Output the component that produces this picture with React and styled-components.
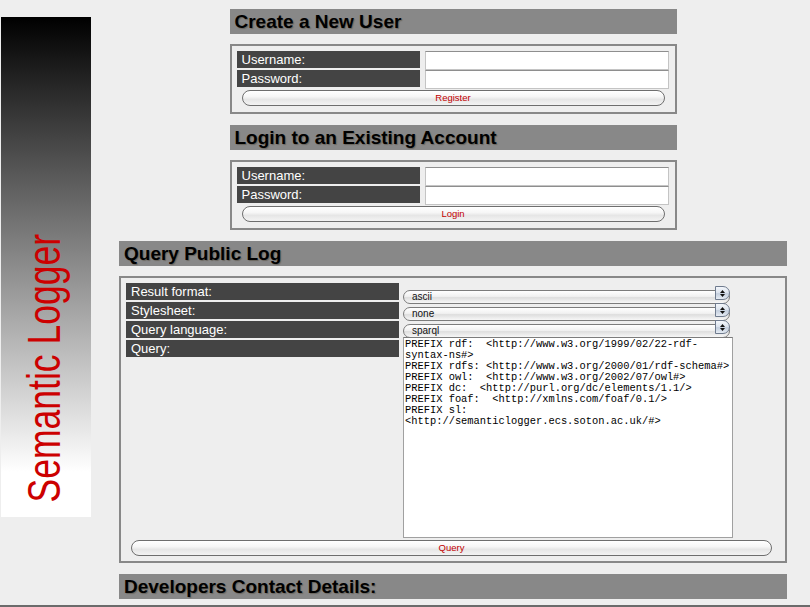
import React from 'react';
import styled, { createGlobalStyle } from 'styled-components';

const Global = createGlobalStyle`
  html, body { margin: 0; padding: 0; background: #eeeeee; }
  body { font-family: "Liberation Sans", Arial, Helvetica, sans-serif; overflow: hidden; }
  * { box-sizing: border-box; }
`;

const Page = styled.div`
  width: 810px;
  height: 607px;
  display: flex;
  flex-direction: column;
  overflow: hidden;
`;

const Columns = styled.div`
  display: flex;
  align-items: flex-start;
`;

const Sidebar = styled.aside`
  flex: none;
  width: 90px;
  height: 500px;
  margin: 17px 0 0 1px;
  padding-bottom: 15px;
  background: linear-gradient(to bottom, #000000 0%, #ffffff 91%, #ffffff 100%);
  display: flex;
  flex-direction: column;
  align-items: center;
  justify-content: flex-end;
`;

const Logo = styled.h1`
  margin: 0;
  writing-mode: vertical-rl;
  transform: rotate(180deg) scaleX(1.3);
  font: 400 35.5px/1 "Liberation Sans", Arial, sans-serif;
  color: #cc0000;
  white-space: nowrap;
`;

const Main = styled.main`
  flex: none;
  width: 668px;
  margin-left: 28px;
  padding-top: 9px;
  display: flex;
  flex-direction: column;
  align-items: center;
  gap: 11px;
`;

const Section = styled.section`
  width: ${p => (p.$narrow ? '447px' : '100%')};
  display: flex;
  flex-direction: column;
  gap: 10px;
`;

const Heading = styled.h2`
  margin: 0;
  height: 25px;
  padding-left: 5px;
  background: #888888;
  color: #000;
  font: 700 19px/26px "Liberation Sans", Arial, sans-serif;
  text-shadow: 1px 1px 1px rgba(40, 25, 0, 0.3);
  white-space: nowrap;
`;

const Box = styled.form`
  display: flex;
  flex-direction: column;
  border: 2px solid #888888;
  padding: 5px 6px ${p => (p.$query ? '5px' : '6px')} 5px;
`;

const AccountGrid = styled.div`
  display: grid;
  grid-template-columns: 183px 244px;
  grid-template-rows: 19px 19px;
  column-gap: 5px;
`;

const Label = styled.label`
  display: block;
  height: 17px;
  padding-left: 5px;
  background: #444444;
  color: #ffffff;
  font: 400 13px/17px "Liberation Sans", Arial, sans-serif;
  white-space: nowrap;
`;

const TextInput = styled.input`
  width: 100%;
  height: 19px;
  margin: 0;
  border: 1px solid #c4c4c4;
  border-top-color: #8e8e8e;
  background: #ffffff;
  padding: 0 3px;
  font: 12px "Liberation Sans", Arial, sans-serif;
`;

const Pill = styled.button`
  display: block;
  height: 16px;
  margin: ${p => p.$top}px ${p => p.$right}px 0 5px;
  padding: 0;
  border: 1px solid #6e6e6e;
  border-radius: 8px;
  background: linear-gradient(to bottom, #ffffff 0%, #f6f6f6 40%, #e6e6e6 60%, #f3f3f3 100%);
  box-shadow: inset 0 1px 0 #ffffff;
  color: #c20000;
  font: 400 9.5px/14px "Liberation Sans", Arial, sans-serif;
  cursor: pointer;
`;

const QueryGrid = styled.div`
  display: grid;
  grid-template-columns: 273px 1fr;
  column-gap: 4px;
`;

const LabelStack = styled.div`
  display: flex;
  flex-direction: column;
  gap: 2px;
`;

const ControlStack = styled.div`
  display: flex;
  flex-direction: column;
  align-items: flex-start;
  gap: 3px;
  padding-top: 3px;
`;

const SelectWrap = styled.div`
  position: relative;
  width: 327px;
  height: 14px;
`;

const Select = styled.select`
  appearance: none;
  -webkit-appearance: none;
  width: 100%;
  height: 14px;
  margin: 0;
  padding: 0 0 0 8px;
  border: 1px solid #7c7c7c;
  border-radius: 7px;
  background: linear-gradient(to bottom, #ffffff 0%, #f1f1f1 45%, #dedede 55%, #f7f7f7 100%);
  color: #111;
  font: 400 10px/12px "Liberation Sans", Arial, sans-serif;
`;

const Stepper = styled.span`
  position: absolute;
  top: 0;
  right: 0;
  width: 15px;
  height: 14px;
  border: 1px solid #6f7b8e;
  border-radius: 0 7px 7px 0;
  background: linear-gradient(to bottom, #f4f7fb 0%, #d9e1ec 50%, #c3cedd 55%, #e6ecf4 100%);
  display: flex;
  flex-direction: column;
  align-items: center;
  justify-content: center;
  gap: 1px;
  pointer-events: none;
`;

const QueryText = styled.textarea`
  display: block;
  width: 330px;
  height: 201px;
  margin: 0;
  padding: 1px;
  border: 1px solid #a0a0a0;
  border-top-color: #7a7a7a;
  background: #ffffff;
  color: #000;
  font: 400 10.4px/11px "Liberation Mono", "Courier New", monospace;
  resize: none;
  overflow: hidden;
  white-space: pre-wrap;
`;

const Rule = styled.div`
  height: 2px;
  margin-top: 6px;
  background: #6b6b6b;
`;

const Arrow = ({ up }) => (
  <svg width="5" height="3" viewBox="0 0 5 3">
    <path d={up ? 'M0 3 L2.5 0 L5 3 Z' : 'M0 0 L2.5 3 L5 0 Z'} fill="#111" />
  </svg>
);

const Dropdown = ({ value, options }) => (
  <SelectWrap>
    <Select defaultValue={value}>
      {options.map(o => (
        <option key={o}>{o}</option>
      ))}
    </Select>
    <Stepper>
      <Arrow up />
      <Arrow />
    </Stepper>
  </SelectWrap>
);

const QUERY = `PREFIX rdf:  <http://www.w3.org/1999/02/22-rdf-syntax-ns#>
PREFIX rdfs: <http://www.w3.org/2000/01/rdf-schema#>
PREFIX owl:  <http://www.w3.org/2002/07/owl#>
PREFIX dc:  <http://purl.org/dc/elements/1.1/>
PREFIX foaf:  <http://xmlns.com/foaf/0.1/>
PREFIX sl:  <http://semanticlogger.ecs.soton.ac.uk/#>`;

const AccountForm = ({ title, action }) => (
  <Section $narrow>
    <Heading>{title}</Heading>
    <Box onSubmit={e => e.preventDefault()}>
      <AccountGrid>
        <Label>Username:</Label>
        <TextInput type="text" />
        <Label>Password:</Label>
        <TextInput type="password" />
      </AccountGrid>
      <Pill type="submit" $top={1} $right={4}>{action}</Pill>
    </Box>
  </Section>
);

export default function App() {
  return (
    <Page>
      <Global />
      <Columns>
        <Sidebar>
          <Logo>Semantic Logger</Logo>
        </Sidebar>
        <Main>
          <AccountForm title="Create a New User" action="Register" />
          <AccountForm title="Login to an Existing Account" action="Login" />
          <Section>
            <Heading>Query Public Log</Heading>
            <Box $query onSubmit={e => e.preventDefault()}>
              <QueryGrid>
                <LabelStack>
                  <Label>Result format:</Label>
                  <Label>Stylesheet:</Label>
                  <Label>Query language:</Label>
                  <Label>Query:</Label>
                </LabelStack>
                <ControlStack>
                  <Dropdown value="ascii" options={['ascii', 'xml', 'json', 'html']} />
                  <Dropdown value="none" options={['none']} />
                  <Dropdown value="sparql" options={['sparql', 'rdql']} />
                  <QueryText defaultValue={QUERY} spellCheck={false} />
                </ControlStack>
              </QueryGrid>
              <Pill type="submit" $top={2} $right={7}>Query</Pill>
            </Box>
          </Section>
          <Section>
            <Heading>Developers Contact Details:</Heading>
          </Section>
        </Main>
      </Columns>
      <Rule />
    </Page>
  );
}
